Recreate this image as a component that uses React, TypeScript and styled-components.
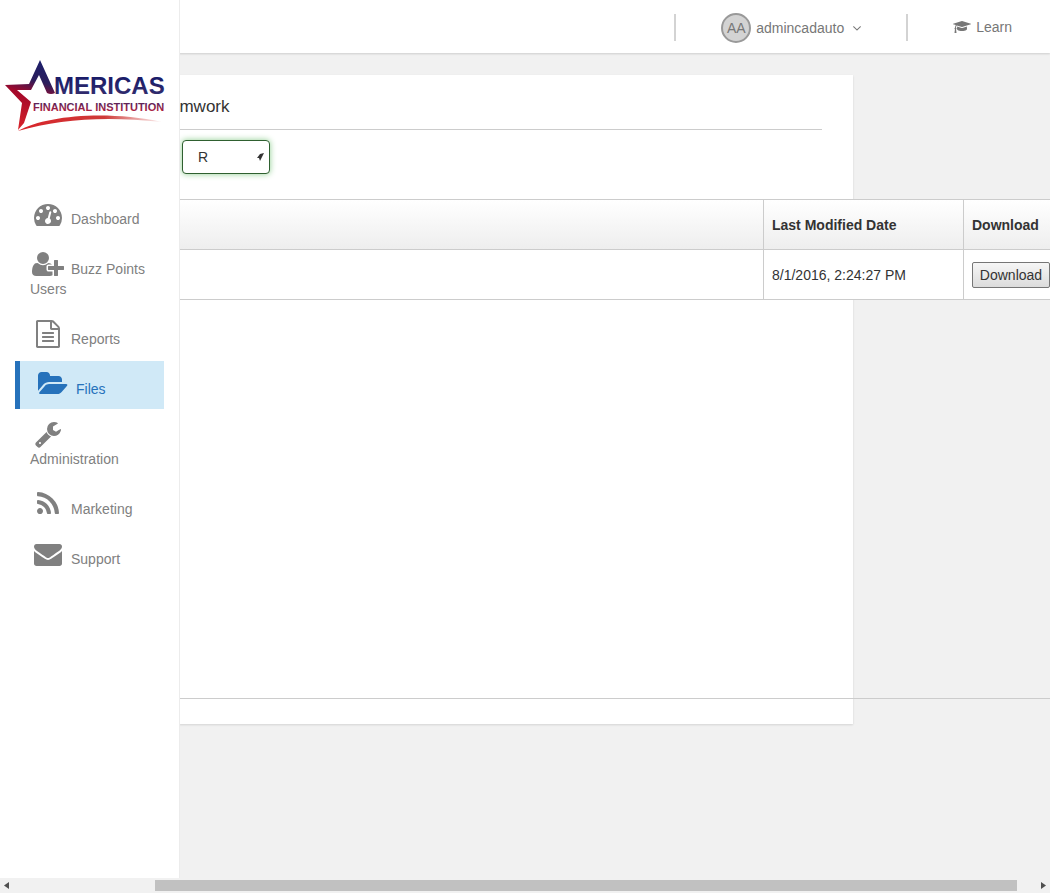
import React from "react";
import styled, { createGlobalStyle } from "styled-components";

const GlobalStyle = createGlobalStyle`
  *, *::before, *::after { box-sizing: border-box; }
  body {
    margin: 0;
    background: #f1f1f1;
    color: #333;
    font: 14px/20px "Liberation Sans", Arial, sans-serif;
  }
  button, select { font: inherit; color: inherit; }
`;

const Page = styled.div`
  display: flex;
  flex-direction: column;
  height: 100vh;
`;

const Body = styled.div`
  display: flex;
  flex: 1;
  min-height: 0;
`;

const Sidebar = styled.aside`
  position: relative;
  z-index: 1;
  flex: none;
  width: 179px;
  background: #fff;
  box-shadow: 1px 0 0 #ececec;
`;

const LogoLink = styled.a`
  display: block;
  padding: 56px 0 55px;
`;

const LogoArt = styled.svg`
  display: block;
  width: 179px;
  height: 80px;
`;

const NavList = styled.ul`
  display: flex;
  flex-direction: column;
  gap: 2px;
  margin: 0;
  padding: 0 15px;
  list-style: none;
`;

const NavLink = styled.a<{ $active?: boolean }>`
  display: block;
  padding: 9px 15px 10px;
  color: ${(p) => (p.$active ? "#2672bb" : "#808080")};
  background: ${(p) => (p.$active ? "#d0e9f7" : "transparent")};
  border-left: ${(p) => (p.$active ? "5px solid #2672bb" : "0")};
  text-decoration: none;
`;

const NavIcon = styled.svg`
  width: 36px;
  height: 28px;
  margin-right: 5px;
  vertical-align: -4px;
  fill: currentColor;
`;

const Main = styled.div`
  flex: 1;
  min-width: 0;
  overflow: hidden;
`;

const TopBar = styled.header`
  display: flex;
  align-items: center;
  justify-content: flex-end;
  height: 53px;
  padding: 0 38px 0 0;
  background: #fff;
  box-shadow: 0 1px 2px rgba(0, 0, 0, 0.15);
  color: #777;
`;

const Divider = styled.span`
  width: 2px;
  height: 27px;
  margin: 1px 45px 0;
  background: #d3d3d3;
`;

const UserButton = styled.button`
  display: flex;
  align-items: center;
  gap: 5px;
  margin-top: 3px;
  padding: 0;
  border: 0;
  background: none;
`;

const Avatar = styled.span`
  width: 30px;
  height: 30px;
  border: 2px solid #999;
  border-radius: 50%;
  background: #d3d3d3;
  line-height: 26px;
  text-align: center;
`;

const Caret = styled.svg`
  width: 8px;
  height: 14px;
  margin-left: 4px;
  fill: currentColor;
`;

const LearnLink = styled.a`
  display: flex;
  align-items: center;
  gap: 5px;
  color: inherit;
  text-decoration: none;
`;

const LearnIcon = styled.svg`
  width: 18px;
  height: 14px;
  fill: currentColor;
`;

const Panel = styled.section`
  margin: 22px 197px 0 0;
  padding: 20px 0 25px;
  background: #fff;
  box-shadow: 0 1px 2px rgba(0, 0, 0, 0.12);
`;

const PanelHead = styled.div`
  margin-right: 31px;
  padding-bottom: 11px;
  border-bottom: 1px solid #ccc;
`;

const Title = styled.h1`
  margin: 0 0 0 -9px;
  font-size: 17px;
  font-weight: normal;
  line-height: 23px;
`;

const SelectBox = styled.div`
  position: relative;
  width: 88px;
  margin: 10px 0 25px 3px;
`;

const Select = styled.select`
  appearance: none;
  display: block;
  width: 100%;
  height: 34px;
  padding: 0 15px;
  border: 1px solid #2f6030;
  border-radius: 4px;
  background: #fff;
  box-shadow: 0 0 6px #8fce90;
  outline: 0;
`;

const SelectMark = styled.svg`
  position: absolute;
  top: 13px;
  right: 6px;
  width: 7px;
  height: 8px;
  fill: #333;
  pointer-events: none;
`;

const GridFrame = styled.div`
  height: 500px;
  margin-right: -197px;
  border: solid #ccc;
  border-width: 1px 0;
`;

const Grid = styled.table`
  width: 100%;
  table-layout: fixed;
  border-collapse: separate;
  border-spacing: 0;
`;

const cell = `
  height: 50px;
  padding: 0 0 0 8px;
  border-bottom: 1px solid #ccc;
  text-align: left;
  white-space: nowrap;
  & + & { border-left: 1px solid #ccc; }
`;

const HeadCell = styled.th<{ $width?: number }>`
  ${cell}
  width: ${(p) => (p.$width ? `${p.$width}px` : "auto")};
  background: linear-gradient(#fff, #eee);
`;

const DataCell = styled.td`
  ${cell}
  background: #fff;
`;

const DownloadButton = styled.button`
  display: block;
  width: 78px;
  height: 26px;
  padding: 0;
  border: 1px solid #767676;
  border-radius: 2px;
  background: linear-gradient(#f6f6f6, #dcdcdc);
`;

const ScrollTrack = styled.div`
  display: flex;
  align-items: center;
  flex: none;
  height: 15px;
  padding: 0 4px;
  background: #f1f1f1;
`;

const ScrollThumb = styled.div`
  flex: 1;
  height: 11px;
  margin: 0 24px 0 146px;
  background: #c1c1c1;
`;

const ScrollArrow = styled.svg`
  width: 5px;
  height: 7px;
  fill: #505050;
`;

const navItems = [
  {
    label: "Dashboard",
    width: 1792,
    path: "M384 1152q0-53-37.5-90.5t-90.5-37.5-90.5 37.5-37.5 90.5 37.5 90.5 90.5 37.5 90.5-37.5 37.5-90.5zm192-448q0-53-37.5-90.5t-90.5-37.5-90.5 37.5-37.5 90.5 37.5 90.5 90.5 37.5 90.5-37.5 37.5-90.5zm428 481l101-382q6-26-7.5-48.5t-38.5-29.5-48 6.5-30 39.5l-101 382q-60 5-107 43.5t-63 98.5q-20 77 20 146t117 89 146-20 89-117q16-60-6-117t-72-91zm660-33q0-53-37.5-90.5t-90.5-37.5-90.5 37.5-37.5 90.5 37.5 90.5 90.5 37.5 90.5-37.5 37.5-90.5zm-640-640q0-53-37.5-90.5t-90.5-37.5-90.5 37.5-37.5 90.5 37.5 90.5 90.5 37.5 90.5-37.5 37.5-90.5zm448 192q0-53-37.5-90.5t-90.5-37.5-90.5 37.5-37.5 90.5 37.5 90.5 90.5 37.5 90.5-37.5 37.5-90.5zm320 448q0 261-141 483-19 29-54 29h-1402q-35 0-54-29-141-221-141-483 0-182 71-348t191-286 286-191 348-71 348 71 286 191 191 286 71 348z",
  },
  {
    label: "Buzz Points Users",
    width: 2048,
    path: "M704 896q-159 0-271.5-112.5t-112.5-271.5 112.5-271.5 271.5-112.5 271.5 112.5 112.5 271.5-112.5 271.5-271.5 112.5zm960 128h352q13 0 22.5 9.5t9.5 22.5v192q0 13-9.5 22.5t-22.5 9.5h-352v352q0 13-9.5 22.5t-22.5 9.5h-192q-13 0-22.5-9.5t-9.5-22.5v-352h-352q-13 0-22.5-9.5t-9.5-22.5v-192q0-13 9.5-22.5t22.5-9.5h352v-352q0-13 9.5-22.5t22.5-9.5h192q13 0 22.5 9.5t9.5 22.5v352zm-736 224q0 52 38 90t90 38h256v238q-68 50-171 50h-874q-121 0-194-69t-73-190q0-53 3.5-103.5t14-109 26.5-108.5 43-97.5 62-81 85.5-53.5 111.5-20q19 0 39 17 79 61 154.5 91.5t164.5 30.5 164.5-30.5 154.5-91.5q20-17 39-17 132 0 217 96h-223q-52 0-90 38t-38 90v192z",
  },
  {
    label: "Reports",
    width: 1792,
    path: "M1596 380q28 28 48 76t20 88v1152q0 40-28 68t-68 28h-1344q-40 0-68-28t-28-68v-1600q0-40 28-68t68-28h896q40 0 88 20t76 48zm-444-244v376h376q-10-29-22-41l-313-313q-12-12-41-22zm384 1528v-1024h-416q-40 0-68-28t-28-68v-416h-768v1536h1280zm-1024-864q0-14 9-23t23-9h704q14 0 23 9t9 23v64q0 14-9 23t-23 9h-704q-14 0-23-9t-9-23v-64zm736 224q14 0 23 9t9 23v64q0 14-9 23t-23 9h-704q-14 0-23-9t-9-23v-64q0-14 9-23t23-9h704zm0 256q14 0 23 9t9 23v64q0 14-9 23t-23 9h-704q-14 0-23-9t-9-23v-64q0-14 9-23t23-9h704z",
  },
  {
    label: "Files",
    active: true,
    width: 1920,
    path: "M1879 952q0 31-31 66l-336 396q-43 51-120.5 86.5t-143.5 35.5h-1088q-34 0-60.5-13t-26.5-43q0-31 31-66l336-396q43-51 120.5-86.5t143.5-35.5h1088q34 0 60.5 13t26.5 43zm-343-344v160h-832q-94 0-197 47.5t-164 119.5l-337 396-5 6q0-4-.5-12.5t-.5-12.5v-960q0-92 66-158t158-66h320q92 0 158 66t66 158v32h544q92 0 158 66t66 158z",
  },
  {
    label: "Administration",
    width: 1792,
    path: "M448 1472q0-26-19-45t-45-19-45 19-19 45 19 45 45 19 45-19 19-45zm644-420l-682 682q-37 37-90 37-52 0-91-37l-106-108q-38-36-38-90 0-53 38-91l681-681q39 98 114.5 173.5t173.5 114.5zm634-435q0 39-23 106-47 134-164.5 217.5t-258.5 83.5q-185 0-316.5-131.5t-131.5-316.5 131.5-316.5 316.5-131.5q58 0 121.5 16.5t107.5 46.5q16 11 16 28t-16 28l-293 169v224l193 107q5-3 79-48.5t135.5-81 70.5-35.5q15 0 23.5 10t8.5 25z",
  },
  {
    label: "Marketing",
    width: 1792,
    path: "M576 1344q0 80-56 136t-136 56-136-56-56-136 56-136 136-56 136 56 56 136zm512 123q2 28-17 48-18 21-47 21h-135q-25 0-43-16.5t-20-41.5q-22-229-184.5-391.5t-391.5-184.5q-25-2-41.5-20t-16.5-43v-135q0-29 21-47 17-17 43-17h5q160 13 306 80.5t259 181.5q114 113 181.5 259t80.5 306zm512 2q2 27-18 47-18 20-46 20h-143q-26 0-44.5-17.5t-19.5-42.5q-12-215-101-408.5t-231.5-336-336-231.5-408.5-102q-25-1-42.5-19.5t-17.5-43.5v-143q0-28 20-46 18-18 44-18h3q262 13 501.5 120t425.5 294q187 186 294 425.5t120 501.5z",
  },
  {
    label: "Support",
    width: 1792,
    path: "M1792 710v794q0 66-47 113t-113 47h-1472q-66 0-113-47t-47-113v-794q44 49 101 87 362 246 497 345 57 42 92.5 65.5t94.5 48 110 24.5h2q51 0 110-24.5t94.5-48 92.5-65.5q170-123 498-345 57-39 100-87zm0-294q0 79-49 151t-122 123q-376 261-468 325-10 7-42.5 31t-54 38.5-52 32.5-57.5 27-50 9h-2q-23 0-50-9t-57.5-27-52-32.5-54-38.5-42.5-31q-91-64-262-182.5t-205-142.5q-62-42-117-115.5t-55-136.5q0-78 41.5-130t118.5-52h1472q65 0 112.5 47t47.5 113z",
  },
];

function Logo() {
  return (
    <LogoArt viewBox="0 0 179 80" role="img" aria-label="Americas Financial Institution">
      <defs>
        <linearGradient id="star" gradientUnits="userSpaceOnUse" x1="44" y1="6" x2="24" y2="74">
          <stop offset="0" stopColor="#1c1f6b" />
          <stop offset="0.28" stopColor="#2b1d5c" />
          <stop offset="0.5" stopColor="#a3082a" />
          <stop offset="1" stopColor="#d8232a" />
        </linearGradient>
        <linearGradient id="name" x1="0" y1="0" x2="0" y2="1">
          <stop offset="0.2" stopColor="#1a1c68" />
          <stop offset="1" stopColor="#37306f" />
        </linearGradient>
        <linearGradient id="sub" x1="0" y1="0" x2="0" y2="1">
          <stop offset="0.1" stopColor="#52245c" />
          <stop offset="0.9" stopColor="#b5203f" />
        </linearGradient>
        <linearGradient id="swoosh" x1="0" y1="0" x2="1" y2="0">
          <stop offset="0" stopColor="#d8232a" />
          <stop offset="0.6" stopColor="#cf3a38" />
          <stop offset="1" stopColor="#cf3a38" stopOpacity="0.05" />
        </linearGradient>
      </defs>
      <path
        fill="url(#star)"
        d="M40 4 L55 37 Q51 39 47 37 L39 19 L31 34 H17 L31 46 L24 67 L18 74 L22 47 L5 29 L29 28 Z"
      />
      <path fill="url(#swoosh)" d="M18 75 C45 60 105 54 162 66 C105 60 60 63 18 75 Z" />
      <text
        x="54"
        y="38"
        fill="url(#name)"
        fontFamily="Liberation Sans, Arial, sans-serif"
        fontWeight="bold"
        fontSize="24"
      >
        MERICAS
      </text>
      <text
        x="33"
        y="55"
        fill="url(#sub)"
        fontFamily="Liberation Sans Narrow, Liberation Sans, Arial, sans-serif"
        fontWeight="bold"
        fontSize="11"
      >
        FINANCIAL INSTITUTION
      </text>
    </LogoArt>
  );
}

export default function App() {
  return (
    <Page>
      <GlobalStyle />
      <Body>
        <Sidebar>
          <LogoLink href="#">
            <Logo />
          </LogoLink>
          <nav>
            <NavList>
              {navItems.map((item) => (
                <li key={item.label}>
                  <NavLink href="#" $active={item.active}>
                    <NavIcon
                      viewBox={`${(item.width - 2304) / 2} 0 2304 1792`}
                      aria-hidden="true"
                    >
                      <path d={item.path} />
                    </NavIcon>
                    {item.label}
                  </NavLink>
                </li>
              ))}
            </NavList>
          </nav>
        </Sidebar>
        <Main>
          <TopBar>
            <Divider />
            <UserButton>
              <Avatar>AA</Avatar>
              admincadauto
              <Caret viewBox="384 0 1024 1792" aria-hidden="true">
                <path d="M1395 736q0 13-10 23l-466 466q-10 10-23 10t-23-10l-466-466q-10-10-10-23t10-23l50-50q10-10 23-10t23 10l393 393 393-393q10-10 23-10t23 10l50 50q10 10 10 23z" />
              </Caret>
            </UserButton>
            <Divider />
            <LearnLink href="#">
              <LearnIcon viewBox="0 0 2304 1792" aria-hidden="true">
                <path d="M1774 836l18 316q4 69-82 128t-235 93.5-323 34.5-323-34.5-235-93.5-82-128l18-316 574 181q22 7 48 7t48-7zm530-324q0 23-22 31l-1120 352q-4 1-10 1t-10-1l-652-206q-43 34-71 111.5t-34 178.5q63 36 63 109 0 69-58 107l58 433q2 14-8 25-9 11-24 11h-192q-15 0-24-11-10-11-8-25l58-433q-58-38-58-107 0-73 65-111 11-207 98-330l-333-104q-22-8-22-31t22-31l1120-352q4-1 10-1t10 1l1120 352q22 8 22 31z" />
              </LearnIcon>
              Learn
            </LearnLink>
          </TopBar>
          <Panel>
            <PanelHead>
              <Title>amwork</Title>
            </PanelHead>
            <SelectBox>
              <Select aria-label="Type" defaultValue="R">
                <option>R</option>
              </Select>
              <SelectMark viewBox="0 0 7 8" aria-hidden="true">
                <path d="M3 1 L7 0 L5 4 L3 8 L2 5 L0 5 Z" />
              </SelectMark>
            </SelectBox>
            <GridFrame>
              <Grid>
                <thead>
                  <tr>
                    <HeadCell />
                    <HeadCell $width={200}>Last Modified Date</HeadCell>
                    <HeadCell $width={87}>Download</HeadCell>
                  </tr>
                </thead>
                <tbody>
                  <tr>
                    <DataCell />
                    <DataCell>8/1/2016, 2:24:27 PM</DataCell>
                    <DataCell>
                      <DownloadButton>Download</DownloadButton>
                    </DataCell>
                  </tr>
                </tbody>
              </Grid>
            </GridFrame>
          </Panel>
        </Main>
      </Body>
      <ScrollTrack aria-hidden="true">
        <ScrollArrow viewBox="0 0 5 7">
          <path d="M5 0 V7 L0 3.5 Z" />
        </ScrollArrow>
        <ScrollThumb />
        <ScrollArrow viewBox="0 0 5 7">
          <path d="M0 0 V7 L5 3.5 Z" />
        </ScrollArrow>
      </ScrollTrack>
    </Page>
  );
}
